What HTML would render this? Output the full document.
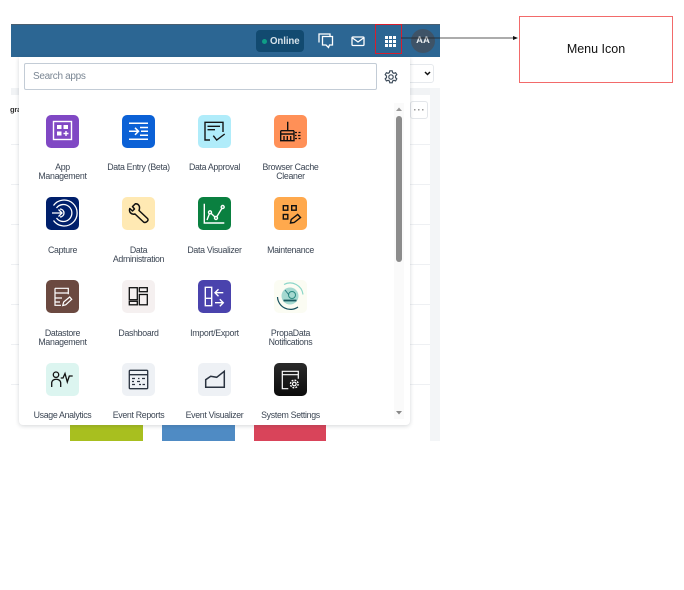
<!DOCTYPE html>
<html><head><meta charset="utf-8"><style>
html,body{margin:0;padding:0;background:#fff;width:684px;height:590px;overflow:hidden;font-family:"Liberation Sans",sans-serif}
div{position:absolute;box-sizing:border-box}
svg{position:absolute;overflow:visible}
.ic{width:33px;height:33px;border-radius:5px}
.ic svg{left:0;top:0;width:33px;height:33px;fill:none;stroke-width:1.4}
.l{width:76px;text-align:center;font-size:8.8px;letter-spacing:-.32px;line-height:9.4px;color:#3c4654}
.ln{left:11px;width:419px;height:1px;background:#eef0f3}
</style></head><body>
<div style="left:11px;top:24px;width:429px;height:417px;background:#fff"></div>
<div style="left:430px;top:88px;width:10px;height:353px;background:#f3f5f7"></div>
<div style="left:11px;top:88px;width:419px;height:7px;background:#f1f3f5"></div>
<div class="ln" style="top:144px"></div><div class="ln" style="top:184px"></div><div class="ln" style="top:224px"></div><div class="ln" style="top:264px"></div><div class="ln" style="top:304px"></div><div class="ln" style="top:344px"></div><div class="ln" style="top:384px"></div>
<div style="left:10px;top:105px;font-size:7.5px;line-height:10px;font-weight:bold;letter-spacing:-.2px;color:#333;width:9px;overflow:hidden;white-space:nowrap">gra</div>
<div style="left:400px;top:64px;width:34px;height:19px;border:1px solid #e6e9ed;border-radius:3px;background:#fff"></div>
<svg style="left:424px;top:71px" width="7" height="5"><path d="M1 1l2.500 2.500L6 1" fill="none" stroke="#111" stroke-width="1.500"/></svg>
<div style="left:410px;top:101px;width:18px;height:18px;border:1px solid #e3e6ea;border-radius:3px;background:#fff"></div>
<svg style="left:414px;top:109px" width="10" height="2" fill="#999"><rect width="1.500" height="1.500"/><rect x="4" width="1.500" height="1.500"/><rect x="8" width="1.500" height="1.500"/></svg>
<div style="left:70px;top:425px;width:73px;height:16px;background:#a8bf1f"></div>
<div style="left:162px;top:425px;width:73px;height:16px;background:#4f8bc4"></div>
<div style="left:254px;top:425px;width:72px;height:16px;background:#d9445a"></div>

<div style="left:11px;top:24px;width:429px;height:33px;background:#2c6693;border-top:1px solid #4a5f70"></div>
<div style="left:256px;top:30px;width:48px;height:22px;background:#124a70;border-radius:4px"></div>
<div style="left:262px;top:39px;width:5px;height:5px;border-radius:50%;background:#0f9d86"></div>
<div style="left:270px;top:36px;font-size:9.700px;line-height:12px;font-weight:bold;letter-spacing:-.1px;color:#d5e2ea">Online</div>
<svg style="left:318px;top:33px" width="16" height="16" fill="none" stroke="#fff" stroke-width="1.300"><path d="M1 9.500V1h11v2.500M4.500 3.500h10v8.500h-3l-1 2.500-2.500-2.500H4.500z"/></svg>
<svg style="left:351px;top:36px" width="14" height="11" fill="none" stroke="#fff" stroke-width="1.300"><rect x="1" y="1" width="12" height="8.500" rx="1"/><path d="M1.500 2l5.500 4 5.500-4"/></svg>
<svg style="left:385px;top:36px" width="11" height="11" fill="#fff"><rect width="3" height="3"/><rect x="4" width="3" height="3"/><rect x="8" width="3" height="3"/><rect y="4" width="3" height="3"/><rect x="4" y="4" width="3" height="3"/><rect x="8" y="4" width="3" height="3"/><rect y="8" width="3" height="3"/><rect x="4" y="8" width="3" height="3"/><rect x="8" y="8" width="3" height="3"/></svg>
<div style="left:411px;top:29px;width:24px;height:24px;border-radius:50%;background:#3e5367;color:#e8ecef;font-size:9.500px;font-weight:bold;line-height:24px;text-align:center">AA</div>

<div style="left:19px;top:57px;width:391px;height:368px;background:#fff;border-radius:0 0 4px 4px;box-shadow:0 1px 4px rgba(40,50,60,.2)"></div>
<div style="left:24px;top:63px;width:353px;height:27px;border:1px solid #c3ccd6;border-radius:2px;background:#fff;font-size:10px;letter-spacing:-.33px;line-height:26px;padding-left:8px;color:#7b8794">Search apps</div>
<svg style="left:384px;top:70px" width="14" height="14" viewBox="0 0 14 14" fill="none" stroke="#3f4d5c" stroke-width="1.200"><circle cx="7" cy="7" r="2.200"/><path d="M5.800 .8h2.400l.4 1.800 1.300.7 1.700-.6 1.200 2-1.300 1.300v1.600l1.300 1.300-1.200 2-1.700-.6-1.300.7-.4 1.800H5.800l-.4-1.800-1.300-.7-1.700.6-1.200-2 1.300-1.300V6L1.200 4.700l1.200-2 1.700.6 1.300-.7z"/></svg>

<div style="left:394px;top:103px;width:10px;height:316px;background:#fafafa"></div>
<div style="left:396px;top:116px;width:6px;height:146px;background:#8c8c8c;border-radius:3px"></div>
<svg style="left:396px;top:107px" width="6" height="4"><path d="M0 4L3 0.500 6 4z" fill="#999"/></svg>
<svg style="left:396px;top:411px" width="6" height="4"><path d="M0 0L3 3.500 6 0z" fill="#888"/></svg>

<!-- row 1 -->
<div class="ic" style="left:46px;top:115px;background:#8048c4"><svg stroke="#fff"><rect x="7.500" y="6.500" width="18" height="18"/><g fill="#fff" stroke="none"><rect x="11" y="10" width="4.500" height="4"/><rect x="17.500" y="10" width="4.500" height="4"/><rect x="11" y="16.500" width="4.500" height="4"/></g><path d="M17.500 18.500h5M20 16v5"/></svg></div>
<div class="ic" style="left:122px;top:115px;background:#0b61d6"><svg stroke="#fff" style="stroke-width:1.500"><path d="M7 8.300h19M18 12.500h8M19 16.300h7M18 20.200h8M7 24.300h19M7 16.300h9.500M13 12.800l3.500 3.500-3.500 3.500"/></svg></div>
<div class="ic" style="left:198px;top:115px;background:#b0ecfa"><svg stroke="#161616"><path d="M12 25H7V7.300h18V17M9.500 11.300H22M9.500 14.700H17M15.300 20.700l3.400 4.300 8-6"/></svg></div>
<div class="ic" style="left:274px;top:115px;background:#ff9057"><svg stroke="#111"><path d="M13.700 6.700v9M6.700 15.700H20M6.700 15.700v10H20v-10M6.700 19h13.300M10 21v4.700M13.300 21v4.700M16.700 21v4.700"/><path d="M21 17.500h2M24.500 17.500h2M21 20.500h1.500M24 20.500h2.500M21 23.500h2M24.500 23.500h2" stroke-width="1.200"/></svg></div>
<div class="l" style="left:24.500px;top:162.500px">App<br>Management</div>
<div class="l" style="left:100.500px;top:162.500px">Data Entry (Beta)</div>
<div class="l" style="left:176.500px;top:162.500px">Data Approval</div>
<div class="l" style="left:252.500px;top:162.500px">Browser Cache<br>Cleaner</div>
<!-- row 2 -->
<div class="ic" style="left:46px;top:197px;background:#001f6b"><svg stroke="#fff" style="stroke-width:1.300"><path d="M6 16h10M12.500 12.500L16 16l-3.500 3.500"/><path d="M7.500 8.500a13 13 0 1 1 0 15M10.500 11a8.500 8.500 0 1 1 0 10M14 12a4 4 0 0 1 0 8" /></svg></div>
<div class="ic" style="left:122px;top:197px;background:#ffe9b3"><svg stroke="#111" style="stroke-width:1.500"><path d="M13.500 6.700L10.500 9.500 12.500 12 10.500 14 7.800 11.500C6.500 15 9.500 18 13 17L21.500 25C23.500 26.500 27.500 23.500 25.500 21.500L17 13.500C18.500 9.500 16.500 6.500 13.500 6.700Z" stroke-linejoin="round"/></svg></div>
<div class="ic" style="left:198px;top:197px;background:#0a8040"><svg stroke="#fff"><path d="M6.300 6.700V26h20"/><path d="M9 23l3-7.700 6 5.700 6.700-11"/><g fill="#0a8040"><circle cx="12" cy="15.300" r="1.500"/><circle cx="18" cy="21" r="1.500"/><circle cx="24.700" cy="10" r="1.500"/></g></svg></div>
<div class="ic" style="left:274px;top:197px;background:#ffa94d"><svg stroke="#111"><rect x="9.300" y="8.700" width="4.500" height="4.500"/><rect x="17.700" y="8.700" width="4.500" height="4.500"/><rect x="9.300" y="17.500" width="4.500" height="4.500"/><path d="M16.500 26l.7-3.500 6.500-5 2.800 3-6.300 5z"/></svg></div>
<div class="l" style="left:24.500px;top:245.500px">Capture</div>
<div class="l" style="left:100.500px;top:245.500px">Data<br>Administration</div>
<div class="l" style="left:176.500px;top:245.500px">Data Visualizer</div>
<div class="l" style="left:252.500px;top:245.500px">Maintenance</div>
<!-- row 3 -->
<div class="ic" style="left:46px;top:280px;background:#6b4940"><svg stroke="#fff" style="stroke-width:1.200"><path d="M9 8.300h13.300v6M9 8.300v17h6M9 13h13M9 18h7M9 22h5"/><path d="M16.700 25.500l1-3.500 6-5 2 2.300-6 5.500z"/></svg></div>
<div class="ic" style="left:122px;top:280px;background:#f5f0f0"><svg stroke="#111" style="stroke-width:1.300"><rect x="7.300" y="7.700" width="8" height="12"/><rect x="7.300" y="21.300" width="8" height="3.500"/><rect x="17.300" y="7.700" width="8" height="4"/><rect x="17.300" y="14.500" width="8" height="10.300"/></svg></div>
<div class="ic" style="left:198px;top:280px;background:#4a43ad"><svg stroke="#fff"><path d="M7.300 7.300h6.400v18.400H7.300zM7.300 18.300h6.400M17 12.700h8.300M20.500 9.200L17 12.700l3.500 3.500M17 22.700h8.300M21.800 19.200l3.500 3.500-3.500 3.500"/></svg></div>
<div class="ic" style="left:274px;top:280px;background:#fbfcf3"><svg><circle cx="16" cy="16" r="8.500" fill="#a5d9d0"/><path d="M10 4.500a13 13 0 0 1 19 10" stroke="#8bd6c8" stroke-width="1.200"/><path d="M24 27A13 13 0 0 1 3.500 17" stroke="#17505e" stroke-width="1.200"/><circle cx="18" cy="15" r="3.500" stroke="#2a8a80" stroke-width="1"/><path d="M11 10l4 5" stroke="#2a7a80" stroke-width="1"/><path d="M9.500 20.500h13" stroke="#1a5a60" stroke-width="1.800"/></svg></div>
<div class="l" style="left:24.500px;top:328.500px">Datastore<br>Management</div>
<div class="l" style="left:100.500px;top:328.500px">Dashboard</div>
<div class="l" style="left:176.500px;top:328.500px">Import/Export</div>
<div class="l" style="left:252.500px;top:328.500px">PropaData<br>Notifications</div>
<!-- row 4 -->
<div class="ic" style="left:46px;top:363px;background:#dcf5f0"><svg stroke="#111" style="stroke-width:1.300"><circle cx="10" cy="11.700" r="2.700"/><path d="M5.700 24v-4c0-5 9-5 9 0v4"/><path d="M14.700 15h2.300l2-4.500 2.300 8.500 2-6h3.400"/></svg></div>
<div class="ic" style="left:122px;top:363px;background:#eef1f5"><svg stroke="#2a3340" style="stroke-width:1.300"><rect x="7.300" y="7.300" width="18.400" height="18.400" rx="1"/><path d="M7.300 11.700h18.400M10 15.500h3M16 15.500h1.500M20 15.500h3M10 18.500h2M15 18.500h3M10 21.500h3M17 21.500h2M20.500 21.500h2.500"/></svg></div>
<div class="ic" style="left:198px;top:363px;background:#eef1f5"><svg stroke="#2a3340" style="stroke-width:1.500"><path d="M7.700 24.300v-7.600l5-3.400 6 1 7.600-6v16zM7.700 24.300h18.600"/></svg></div>
<div class="ic" style="left:274px;top:363px;background:linear-gradient(#2a2a2a,#0c0c0c)"><svg stroke="#fff" style="stroke-width:1.200"><path d="M14.300 25.700H8.300V8.300h16v7.400M8.300 11.700h16"/><circle cx="20.300" cy="21" r="1.800"/><circle cx="20.300" cy="21" r="3.800" stroke-dasharray="1.800 1.200" stroke-width="1.400"/></svg></div>
<div class="l" style="left:24.500px;top:410.500px">Usage Analytics</div>
<div class="l" style="left:100.500px;top:410.500px">Event Reports</div>
<div class="l" style="left:176.500px;top:410.500px">Event Visualizer</div>
<div class="l" style="left:252.500px;top:410.500px">System Settings</div>

<!-- annotation -->
<div style="left:375px;top:24px;width:27px;height:30px;border:1px solid #d81e2c"></div>
<svg style="left:401px;top:34px" width="122" height="8"><path d="M0 4h113" stroke="#222" stroke-width=".8"/><path d="M112 2l5 2-5 2z" fill="#111"/></svg>
<div style="left:519px;top:16px;width:154px;height:67px;border:1px solid #f26a6a;background:#fff;font-size:12.500px;line-height:65px;text-align:center;color:#111">Menu Icon</div>
</body></html>
